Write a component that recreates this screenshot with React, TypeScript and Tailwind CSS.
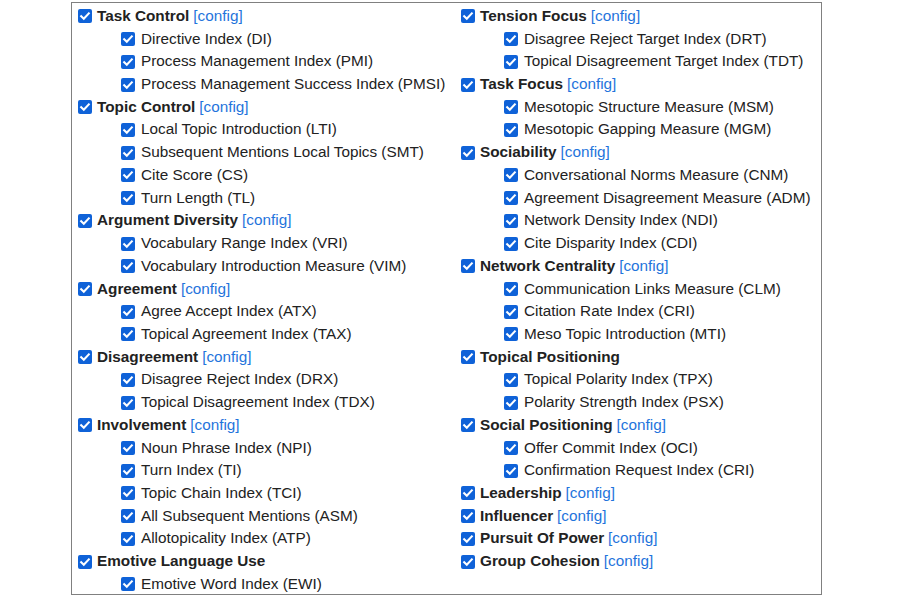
import React from "react";

type Group = { name: string; config: boolean; items: string[] };

const left: Group[] = [
  { name: "Task Control", config: true, items: ["Directive Index (DI)", "Process Management Index (PMI)", "Process Management Success Index (PMSI)"] },
  { name: "Topic Control", config: true, items: ["Local Topic Introduction (LTI)", "Subsequent Mentions Local Topics (SMT)", "Cite Score (CS)", "Turn Length (TL)"] },
  { name: "Argument Diversity", config: true, items: ["Vocabulary Range Index (VRI)", "Vocabulary Introduction Measure (VIM)"] },
  { name: "Agreement", config: true, items: ["Agree Accept Index (ATX)", "Topical Agreement Index (TAX)"] },
  { name: "Disagreement", config: true, items: ["Disagree Reject Index (DRX)", "Topical Disagreement Index (TDX)"] },
  { name: "Involvement", config: true, items: ["Noun Phrase Index (NPI)", "Turn Index (TI)", "Topic Chain Index (TCI)", "All Subsequent Mentions (ASM)", "Allotopicality Index (ATP)"] },
  { name: "Emotive Language Use", config: false, items: ["Emotive Word Index (EWI)"] },
];

const right: Group[] = [
  { name: "Tension Focus", config: true, items: ["Disagree Reject Target Index (DRT)", "Topical Disagreement Target Index (TDT)"] },
  { name: "Task Focus", config: true, items: ["Mesotopic Structure Measure (MSM)", "Mesotopic Gapping Measure (MGM)"] },
  { name: "Sociability", config: true, items: ["Conversational Norms Measure (CNM)", "Agreement Disagreement Measure (ADM)", "Network Density Index (NDI)", "Cite Disparity Index (CDI)"] },
  { name: "Network Centrality", config: true, items: ["Communication Links Measure (CLM)", "Citation Rate Index (CRI)", "Meso Topic Introduction (MTI)"] },
  { name: "Topical Positioning", config: false, items: ["Topical Polarity Index (TPX)", "Polarity Strength Index (PSX)"] },
  { name: "Social Positioning", config: true, items: ["Offer Commit Index (OCI)", "Confirmation Request Index (CRI)"] },
  { name: "Leadership", config: true, items: [] },
  { name: "Influencer", config: true, items: [] },
  { name: "Pursuit Of Power", config: true, items: [] },
  { name: "Group Cohesion", config: true, items: [] },
];

function Box() {
  return (
    <span className="w-[14px] h-[14px] shrink-0 rounded-[2px] bg-[#0f62d8] flex items-center justify-center">
      <svg width="14" height="14" viewBox="0 0 14 14">
        <path d="M3.2 7.2 L5.8 9.8 L10.8 4.4" fill="none" stroke="#fff" strokeWidth="2.1" strokeLinecap="square" />
      </svg>
    </span>
  );
}

function Column({ groups }: { groups: Group[] }) {
  return (
    <div className="flex flex-col">
      {groups.map((g) => (
        <div key={g.name} className="flex flex-col">
          <label className="flex items-center h-[22.72px] gap-[5px] whitespace-nowrap">
            <Box />
            <span className="font-bold">{g.name}</span>
            {g.config && <a className="text-[#1f74dc] ml-[-1px]">[config]</a>}
          </label>
          {g.items.map((it) => (
            <label key={it} className="flex items-center h-[22.72px] gap-[6px] pl-[43px] whitespace-nowrap">
              <Box />
              <span>{it}</span>
            </label>
          ))}
        </div>
      ))}
    </div>
  );
}

export default function App() {
  return (
    <div className="w-[900px] h-[600px] bg-white pt-[2px]" style={{ fontFamily: '"Liberation Sans", Arial, sans-serif' }}>
      <div className="ml-[71px] w-[751px] h-[593px] border border-[#808080] overflow-hidden pl-[6px] pt-[2px] text-[15.3px] text-[#222]">
        <div className="grid grid-cols-[383px_1fr]">
          <Column groups={left} />
          <Column groups={right} />
        </div>
      </div>
    </div>
  );
}
